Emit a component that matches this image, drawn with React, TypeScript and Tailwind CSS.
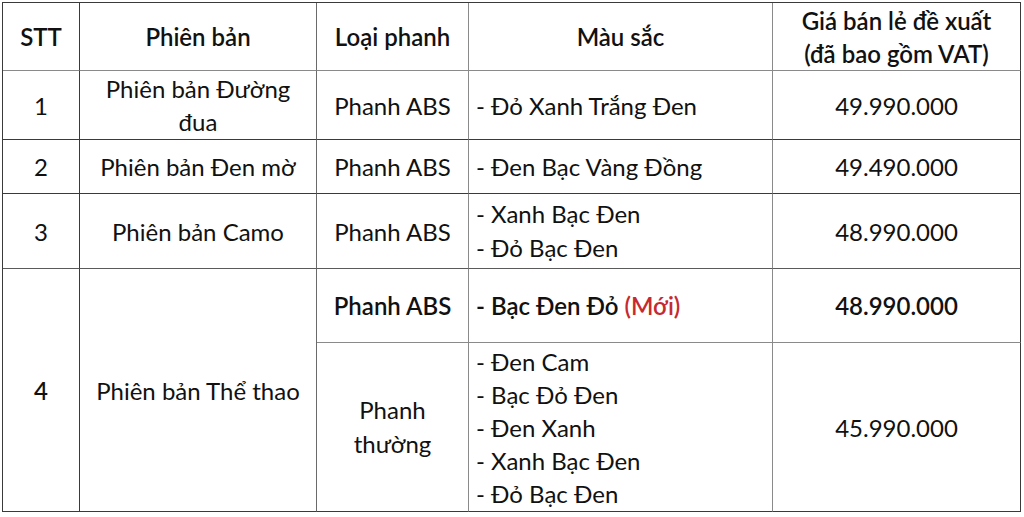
import React from "react";

const dark = "border-[#3a3a3a]";

export default function App() {
  const font = { fontFamily: "Lato, 'Noto Sans', sans-serif" };
  const cellBase = "border-r border-b p-0 align-middle text-[24px] leading-[33px] text-[#111]";
  return (
    <div className="w-[1024px] h-[517px] bg-white pl-[2px] pt-[2px]" style={font}>
      <table className={`table-fixed border-separate border-spacing-0 border-t border-l ${dark} w-[1019px]`}>
        <colgroup>
          <col className="w-[77px]" />
          <col className="w-[237px]" />
          <col className="w-[152px]" />
          <col className="w-[304px]" />
          <col className="w-[248px]" />
        </colgroup>
        <tbody>
          <tr className="h-[68px] font-semibold">
            <td className={`${cellBase} text-center border-r-[#3a3a3a] border-b-[#8a8a8a]`}>STT</td>
            <td className={`${cellBase} text-center border-r-[#6a6a6a] border-b-[#8a8a8a]`}>Phiên bản</td>
            <td className={`${cellBase} text-center border-r-[#8a8a8a] border-b-[#8a8a8a]`}>Loại phanh</td>
            <td className={`${cellBase} text-center border-r-[#8a8a8a] border-b-[#8a8a8a]`}>Màu sắc</td>
            <td className={`${cellBase} text-center ${dark} border-b-[#8a8a8a]`}>
              Giá bán lẻ đề xuất
              <br />
              (đã bao gồm VAT)
            </td>
          </tr>
          <tr className="h-[69px]">
            <td className={`${cellBase} text-center ${dark}`}>1</td>
            <td className={`${cellBase} text-center border-r-[#6a6a6a] border-b-[#3a3a3a]`}>
              Phiên bản Đường
              <br />
              đua
            </td>
            <td className={`${cellBase} text-center border-r-[#8a8a8a] border-b-[#3a3a3a]`}>Phanh ABS</td>
            <td className={`${cellBase} pl-[7px] border-r-[#8a8a8a] border-b-[#3a3a3a]`}>- Đỏ Xanh Trắng Đen</td>
            <td className={`${cellBase} text-center ${dark}`}>49.990.000</td>
          </tr>
          <tr className="h-[54px]">
            <td className={`${cellBase} text-center ${dark}`}>2</td>
            <td className={`${cellBase} text-center border-r-[#6a6a6a] border-b-[#3a3a3a]`}>Phiên bản Đen mờ</td>
            <td className={`${cellBase} text-center border-r-[#8a8a8a] border-b-[#3a3a3a]`}>Phanh ABS</td>
            <td className={`${cellBase} pl-[7px] border-r-[#8a8a8a] border-b-[#3a3a3a]`}>- Đen Bạc Vàng Đồng</td>
            <td className={`${cellBase} text-center ${dark}`}>49.490.000</td>
          </tr>
          <tr className="h-[75px]">
            <td className={`${cellBase} text-center ${dark} border-b-[#5a5a5a]`}>3</td>
            <td className={`${cellBase} text-center border-r-[#6a6a6a] border-b-[#5a5a5a]`}>Phiên bản Camo</td>
            <td className={`${cellBase} text-center border-r-[#8a8a8a] border-b-[#5a5a5a]`}>Phanh ABS</td>
            <td className={`${cellBase} pl-[7px] leading-[34px] border-r-[#8a8a8a] border-b-[#5a5a5a]`}>
              - Xanh Bạc Đen
              <br />- Đỏ Bạc Đen
            </td>
            <td className={`${cellBase} text-center ${dark} border-b-[#5a5a5a]`}>48.990.000</td>
          </tr>
          <tr className="h-[74px]">
            <td rowSpan={2} className={`${cellBase} text-center ${dark}`}>
              <span className="font-semibold">4</span>
            </td>
            <td rowSpan={2} className={`${cellBase} text-center border-r-[#6a6a6a] border-b-[#3a3a3a]`}>
              Phiên bản Thể thao
            </td>
            <td className={`${cellBase} text-center font-semibold border-r-[#8a8a8a] border-b-[#8a8a8a]`}>Phanh ABS</td>
            <td className={`${cellBase} pl-[7px] font-semibold border-r-[#8a8a8a] border-b-[#8a8a8a]`}>
              - Bạc Đen Đỏ <span className="text-[#c62a2f]">(Mới)</span>
            </td>
            <td className={`${cellBase} text-center font-semibold ${dark} border-b-[#8a8a8a]`}>48.990.000</td>
          </tr>
          <tr className="h-[169px]">
            <td className={`${cellBase} text-center leading-[34px] border-r-[#8a8a8a] border-b-[#3a3a3a]`}>
              Phanh
              <br />
              thường
            </td>
            <td className={`${cellBase} pl-[7px] leading-[33.4px] border-r-[#8a8a8a] border-b-[#3a3a3a]`}>
              - Đen Cam
              <br />- Bạc Đỏ Đen
              <br />- Đen Xanh
              <br />- Xanh Bạc Đen
              <br />- Đỏ Bạc Đen
            </td>
            <td className={`${cellBase} text-center ${dark}`}>45.990.000</td>
          </tr>
        </tbody>
      </table>
    </div>
  );
}
